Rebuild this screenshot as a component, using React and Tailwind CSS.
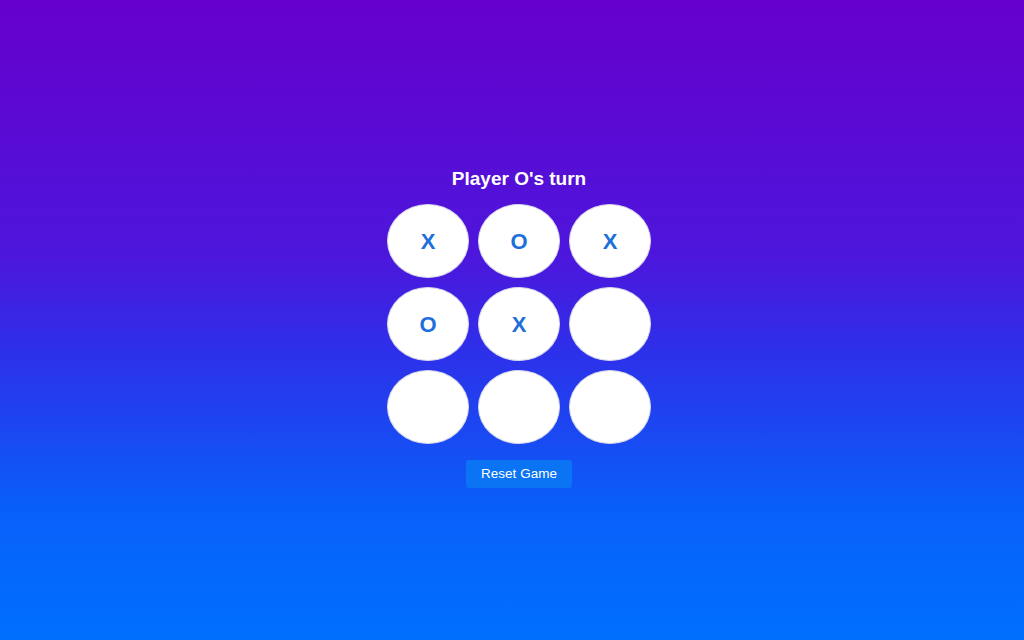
import React, { useState } from 'react'

const initial = ['X', 'O', 'X', 'O', 'X', null, null, null, null]

export default function App() {
    const [board, setBoard] = useState(initial)
    const [turn, setTurn] = useState('O')

    const play = (i) => {
        if (board[i]) return
        const next = [...board]
        next[i] = turn
        setBoard(next)
        setTurn(turn === 'X' ? 'O' : 'X')
    }

    const reset = () => {
        setBoard(Array(9).fill(null))
        setTurn('X')
    }

    return (
        <div
            className="min-h-screen w-full flex flex-col items-center justify-center pl-[14px] pt-[16px] bg-[linear-gradient(to_bottom,#6600cc_0%,#4d16dc_40%,#2d30ea_55%,#0860fa_80%,#0070ff_100%)]"
            style={{ fontFamily: '"Liberation Sans", Arial, sans-serif' }}
        >
            <h1 className="text-white font-bold text-[19px] leading-[22px] mb-[14px]">Player {turn}'s turn</h1>

            <div className="grid grid-cols-[82px_82px_82px] gap-x-[9px] gap-y-[9px]">
                {board.map((v, i) => (
                    <button
                        key={i}
                        onClick={() => play(i)}
                        className="w-[82px] h-[74px] rounded-[50%] bg-white border border-[#d8d8e8] flex items-center justify-center text-[22px] font-bold text-[#1e6fdc]"
                    >
                        {v}
                    </button>
                ))}
            </div>

            <button
                onClick={reset}
                className="mt-[16px] w-[106px] h-[28px] bg-[#0a74f4] text-white text-[13.5px] rounded-[3px]"
            >
                Reset Game
            </button>
        </div>
    )
}
